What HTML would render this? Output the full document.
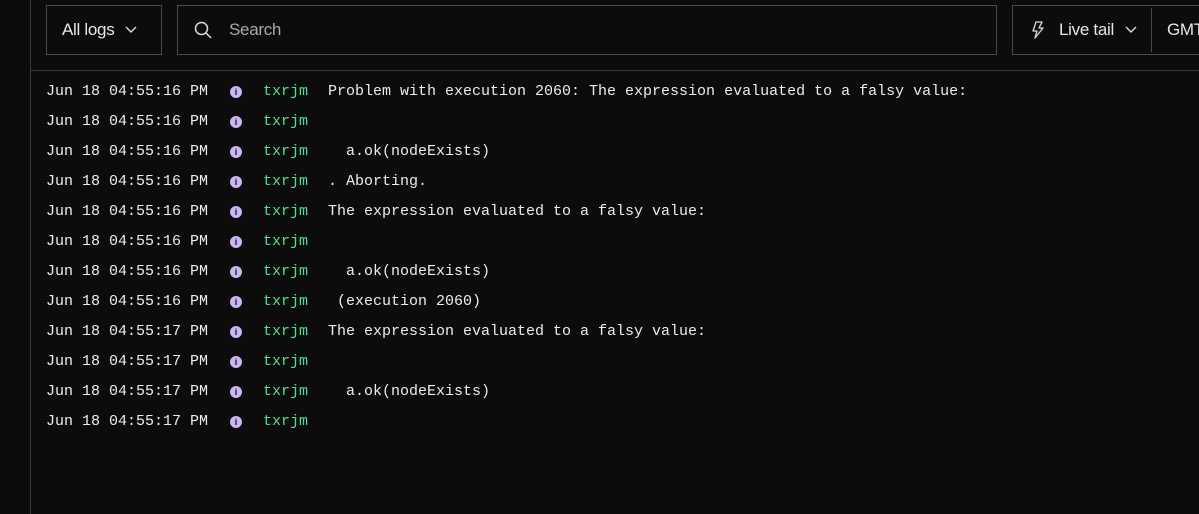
<!DOCTYPE html>
<html><head><style>
body{margin:0;width:1199px;height:514px;background:#0c0c0c;overflow:hidden;position:relative;font-family:"Liberation Sans",sans-serif;color:#e6e6e6}
.side{position:absolute;left:30px;top:0;width:1px;height:514px;background:#3a3a3a}
.hr{position:absolute;left:31px;top:70px;right:0;height:1px;background:#3a3a3a}
.box{position:absolute;top:5px;height:50px;border:1px solid #4a4a4a;box-sizing:border-box;display:flex;align-items:center;font-size:17px;letter-spacing:-0.3px}
.row{position:absolute;left:46px;height:20px;font-family:"Liberation Mono",monospace;font-size:15px;line-height:20px;white-space:pre;color:#ececec}
.ic{position:absolute;left:184px;top:4px;width:12px;height:12px;border-radius:50%;background:#c9b6f2;color:#111;font-size:9px;font-weight:bold;line-height:12px;text-align:center;font-family:"Liberation Sans",sans-serif}
.g{position:absolute;left:217px;color:#4ee38c}
.m{position:absolute;left:282px}
</style></head><body>
<div class="side"></div><div class="hr"></div>
<div class="box" style="left:46px;width:116px"><span style="margin-left:15px">All logs</span>
<svg style="margin-left:10px" width="14" height="10" viewBox="0 0 14 10"><path d="M2 2l5 5 5-5" fill="none" stroke="#ddd" stroke-width="1.4"/></svg></div>
<div class="box" style="left:177px;width:820px"><svg style="margin-left:15px" width="20" height="20" viewBox="0 0 20 20"><circle cx="8.5" cy="8.5" r="6" fill="none" stroke="#ddd" stroke-width="1.5"/><path d="M13 13l5 5" stroke="#ddd" stroke-width="1.5"/></svg><span style="margin-left:16px;color:#aaa">Search</span></div>
<div class="box" style="left:1012px;width:200px"><svg style="margin-left:18px" width="14" height="18" viewBox="0 0 14 18"><path d="M5 1h6l-3 6h4l-8 10 2-7H2z" fill="none" stroke="#ddd" stroke-width="1.3" stroke-linejoin="round"/></svg><span style="margin-left:14px">Live tail</span>
<svg style="margin-left:10px" width="14" height="10" viewBox="0 0 14 10"><path d="M2 2l5 5 5-5" fill="none" stroke="#ddd" stroke-width="1.4"/></svg>
<div style="margin-left:13px;width:1px;height:44px;background:#4a4a4a"></div><span style="margin-left:15px">GMT</span></div>
<div class="row" style="top:82px">Jun 18 04:55:16 PM<span class="ic">i</span><span class="g">txrjm</span><span class="m">Problem with execution 2060: The expression evaluated to a falsy value:</span></div>
<div class="row" style="top:112px">Jun 18 04:55:16 PM<span class="ic">i</span><span class="g">txrjm</span></div>
<div class="row" style="top:142px">Jun 18 04:55:16 PM<span class="ic">i</span><span class="g">txrjm</span><span class="m">  a.ok(nodeExists)</span></div>
<div class="row" style="top:172px">Jun 18 04:55:16 PM<span class="ic">i</span><span class="g">txrjm</span><span class="m">. Aborting.</span></div>
<div class="row" style="top:202px">Jun 18 04:55:16 PM<span class="ic">i</span><span class="g">txrjm</span><span class="m">The expression evaluated to a falsy value:</span></div>
<div class="row" style="top:232px">Jun 18 04:55:16 PM<span class="ic">i</span><span class="g">txrjm</span></div>
<div class="row" style="top:262px">Jun 18 04:55:16 PM<span class="ic">i</span><span class="g">txrjm</span><span class="m">  a.ok(nodeExists)</span></div>
<div class="row" style="top:292px">Jun 18 04:55:16 PM<span class="ic">i</span><span class="g">txrjm</span><span class="m"> (execution 2060)</span></div>
<div class="row" style="top:322px">Jun 18 04:55:17 PM<span class="ic">i</span><span class="g">txrjm</span><span class="m">The expression evaluated to a falsy value:</span></div>
<div class="row" style="top:352px">Jun 18 04:55:17 PM<span class="ic">i</span><span class="g">txrjm</span></div>
<div class="row" style="top:382px">Jun 18 04:55:17 PM<span class="ic">i</span><span class="g">txrjm</span><span class="m">  a.ok(nodeExists)</span></div>
<div class="row" style="top:412px">Jun 18 04:55:17 PM<span class="ic">i</span><span class="g">txrjm</span></div>
</body></html>
